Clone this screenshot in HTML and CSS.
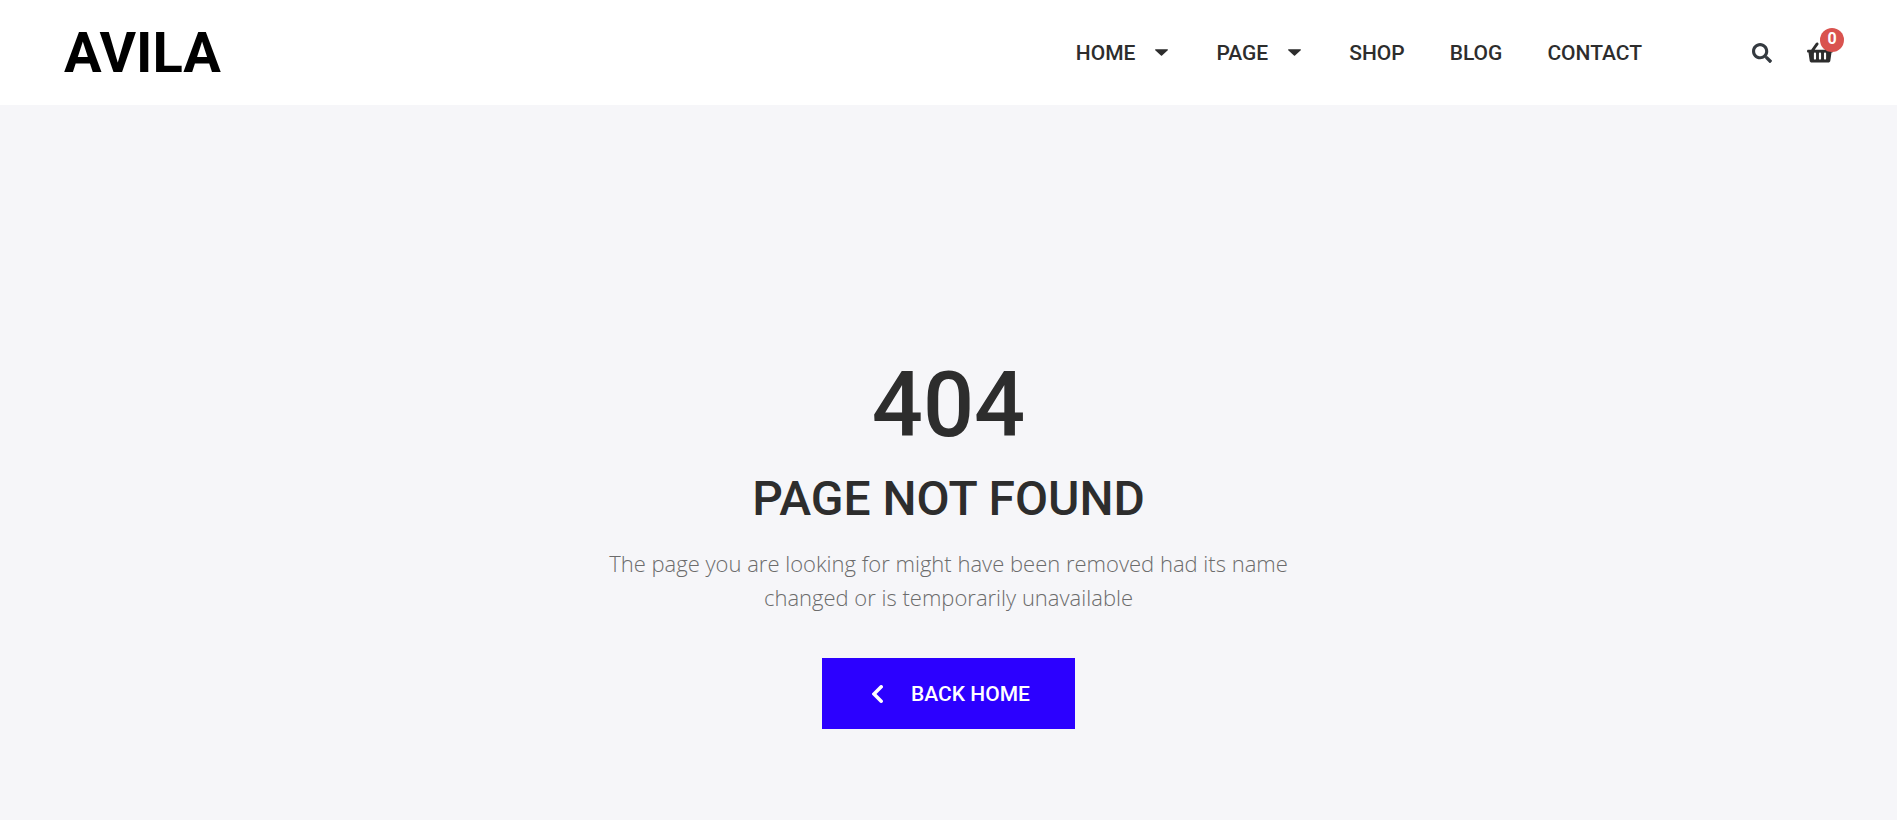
FILE: index.html
```html
<!DOCTYPE html>
<html lang="en">
<head>
<meta charset="utf-8">
<meta name="viewport" content="width=device-width, initial-scale=1">
<title>Avila - Page not found</title>
<link rel="stylesheet" href="styles.css">
</head>
<body>

<header class="header">
  <a class="logo" href="#">AVILA</a>

  <nav class="nav">
    <ul class="menu">
      <li><a class="has-sub" href="#">HOME <svg class="caret" viewBox="0 0 12 6" aria-hidden="true"><path d="M0.6 0h10.8c.5 0 .8.6.4 1L6.5 5.8a.7.7 0 0 1-1 0L.2 1C-.2.6.1 0 .6 0z"/></svg></a></li>
      <li><a class="has-sub" href="#">PAGE <svg class="caret" viewBox="0 0 12 6" aria-hidden="true"><path d="M0.6 0h10.8c.5 0 .8.6.4 1L6.5 5.8a.7.7 0 0 1-1 0L.2 1C-.2.6.1 0 .6 0z"/></svg></a></li>
      <li><a href="#">SHOP</a></li>
      <li><a href="#">BLOG</a></li>
      <li><a href="#">CONTACT</a></li>
    </ul>

    <div class="tools">
      <button class="tool" type="button" aria-label="Search">
        <svg class="search-icon" viewBox="0 0 512 512" aria-hidden="true"><path d="M505 442.7L405.3 343c-4.500-4.500-10.600-7-17-7H372c27.600-35.300 44-79.700 44-128C416 93.100 322.900 0 208 0S0 93.100 0 208s93.100 208 208 208c48.300 0 92.700-16.400 128-44v16.300c0 6.400 2.500 12.500 7 17l99.700 99.700c9.400 9.400 24.600 9.400 33.900 0l28.300-28.300c9.400-9.400 9.400-24.600.1-34zM208 336c-70.700 0-128-57.200-128-128 0-70.700 57.200-128 128-128 70.700 0 128 57.200 128 128 0 70.700-57.200 128-128 128z"/></svg>
      </button>
      <a class="tool cart" href="#" aria-label="Cart">
        <svg class="cart-icon" viewBox="0 0 576 512" aria-hidden="true"><path d="M576 216v16c0 13.255-10.745 24-24 24h-8l-26.113 182.788C514.509 462.435 494.257 480 470.370 480H105.630c-23.887 0-44.139-17.565-47.518-41.212L32 256h-8c-13.255 0-24-10.745-24-24v-16c0-13.255 10.745-24 24-24h67.341l106.780-146.821c10.395-14.292 30.407-17.453 44.701-7.058 14.293 10.395 17.453 30.408 7.058 44.701L170.477 192h235.046L326.120 82.821c-10.395-14.292-7.234-34.306 7.059-44.701 14.291-10.395 34.306-7.235 44.701 7.058L484.659 192H552c13.255 0 24 10.745 24 24zM312 392V280c0-13.255-10.745-24-24-24s-24 10.745-24 24v112c0 13.255 10.745 24 24 24s24-10.745 24-24zm112 0V280c0-13.255-10.745-24-24-24s-24 10.745-24 24v112c0 13.255 10.745 24 24 24s24-10.745 24-24zm-224 0V280c0-13.255-10.745-24-24-24s-24 10.745-24 24v112c0 13.255 10.745 24 24 24s24-10.745 24-24z"/></svg>
        <span class="badge">0</span>
      </a>
    </div>
  </nav>
</header>

<main class="error">
  <h1 class="error-code">404</h1>
  <h2 class="error-title">PAGE NOT FOUND</h2>
  <p class="error-text">The page you are looking for might have been removed had its name changed or is temporarily unavailable</p>
  <a class="btn" href="#">
    <svg class="chevron" viewBox="0 0 11 18" aria-hidden="true"><path d="M9.200 1.800L2 9l7.200 7.200"/></svg>
    BACK HOME
  </a>
</main>

</body>
</html>
```

FILE: styles.css
```css
* {
  box-sizing: border-box;
}

body {
  display: flex;
  flex-direction: column;
  min-height: 100vh;
  margin: 0;
  font-family: Roboto, sans-serif;
  color: #2d2d2d;
  background-color: #fff;
}

a {
  color: inherit;
  text-decoration: none;
}

.header {
  display: flex;
  align-items: center;
  justify-content: space-between;
  height: 105px;
  padding: 0 64px;
  background-color: #fff;
}

.logo {
  font-size: 56px;
  font-weight: 700;
  line-height: 64px;
  color: #000;
}

.nav {
  display: flex;
  align-items: center;
  gap: 110px;
}

.menu {
  display: flex;
  gap: 45px;
  margin: 0;
  padding: 0;
  list-style: none;
  font-size: 21px;
  font-weight: 500;
  line-height: 24px;
}

.has-sub {
  display: flex;
  align-items: center;
  gap: 20px;
  padding-right: 3px;
}

.caret {
  width: 13px;
  height: 7px;
  fill: currentColor;
}

.tools {
  display: flex;
  align-items: center;
  gap: 35px;
}

.tool {
  display: flex;
  padding: 0;
  border: none;
  background: none;
  color: #2d2d2d;
  cursor: pointer;
}

.search-icon {
  width: 20px;
  height: 20px;
  fill: #343a40;
}

.cart {
  position: relative;
}

.cart-icon {
  width: 26px;
  height: 23px;
  fill: currentColor;
}

/* item count over the basket */
.badge {
  position: absolute;
  top: -13px;
  right: -11px;
  width: 24px;
  height: 24px;
  border-radius: 50%;
  background-color: #d9534f;
  color: #fff;
  font-size: 16px;
  font-weight: 700;
  line-height: 22px;
  text-align: center;
}

.error {
  flex: 1;
  display: flex;
  flex-direction: column;
  align-items: center;
  padding: 247px 20px 90px;
  background-color: #f6f6f9;
  text-align: center;
}

.error-code {
  margin: 0;
  font-size: 90px;
  font-weight: 500;
  line-height: 108px;
}

.error-title {
  margin: 10px 0 12px;
  font-size: 48px;
  font-weight: 500;
  line-height: 58px;
}

.error-text {
  max-width: 720px;
  margin: 6px 0 44px;
  font-family: "Open Sans", sans-serif;
  font-size: 22px;
  font-weight: 300;
  line-height: 34px;
  color: #6c6c6c;
}

.btn {
  display: flex;
  align-items: center;
  gap: 28px;
  padding: 24px 45px 23px 50px;
  background-color: #2c00ff;
  color: #fff;
  font-size: 21px;
  font-weight: 500;
  line-height: 24px;
}

.btn:hover {
  background-color: #2300cc;
}

.chevron {
  width: 11px;
  height: 18px;
  fill: none;
  stroke: currentColor;
  stroke-width: 3.5;
  stroke-linecap: round;
}
```
